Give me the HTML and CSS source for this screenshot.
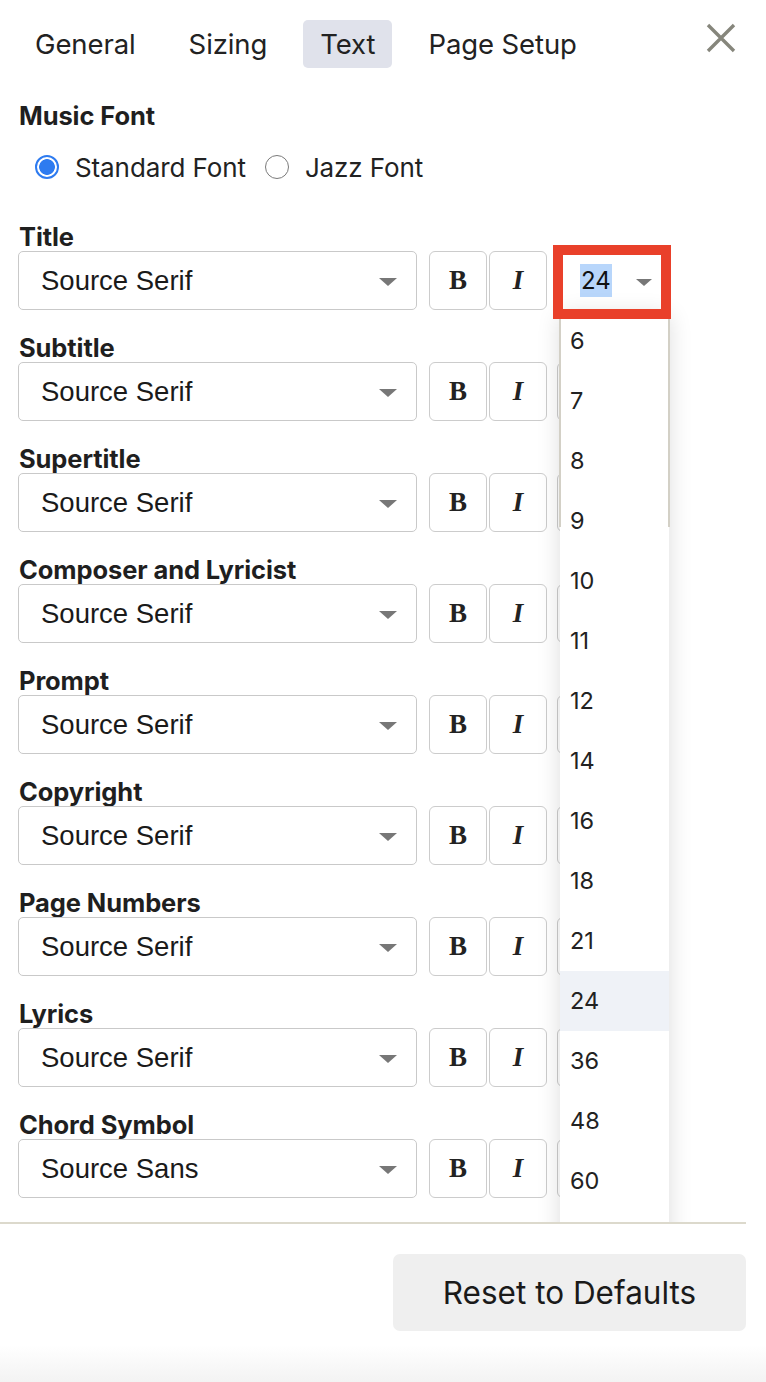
FILE: index.html
```html
<!DOCTYPE html>
<html>
<head>
<meta charset="utf-8">
<link rel="stylesheet" href="styles.css">
</head>
<body>
<div class="dialog">
  <div class="content">
    <div class="tabbar">
      <nav class="tabs">
        <span class="tab">General</span>
        <span class="tab">Sizing</span>
        <span class="tab active">Text</span>
        <span class="tab">Page Setup</span>
      </nav>
      <button class="close" aria-label="Close">
        <svg width="30" height="30" viewBox="0 0 30 30"><path d="M2 2 L28 28 M28 2 L2 28" stroke="#86867c" stroke-width="3.4" fill="none"/></svg>
      </button>
    </div>

    <section class="music">
      <div class="label">Music Font</div>
      <div class="radios">
        <span class="radio checked"></span><span class="rlabel">Standard Font</span>
        <span class="radio"></span><span class="rlabel">Jazz Font</span>
      </div>
    </section>

    <div class="rows">
      <div class="row">
        <div class="label">Title</div>
        <div class="controls">
          <div class="select"><span>Source Serif</span><i class="caret"></i></div>
          <div class="btn b">B</div><div class="btn it">I</div>
          <div class="size focused"><span class="sel">24</span><i class="caret"></i></div>
        </div>
      </div>
      <div class="row">
        <div class="label">Subtitle</div>
        <div class="controls">
          <div class="select"><span>Source Serif</span><i class="caret"></i></div>
          <div class="btn b">B</div><div class="btn it">I</div>
          <div class="size"></div>
        </div>
      </div>
      <div class="row">
        <div class="label">Supertitle</div>
        <div class="controls">
          <div class="select"><span>Source Serif</span><i class="caret"></i></div>
          <div class="btn b">B</div><div class="btn it">I</div>
          <div class="size"></div>
        </div>
      </div>
      <div class="row">
        <div class="label">Composer and Lyricist</div>
        <div class="controls">
          <div class="select"><span>Source Serif</span><i class="caret"></i></div>
          <div class="btn b">B</div><div class="btn it">I</div>
          <div class="size"></div>
        </div>
      </div>
      <div class="row">
        <div class="label">Prompt</div>
        <div class="controls">
          <div class="select"><span>Source Serif</span><i class="caret"></i></div>
          <div class="btn b">B</div><div class="btn it">I</div>
          <div class="size"></div>
        </div>
      </div>
      <div class="row">
        <div class="label">Copyright</div>
        <div class="controls">
          <div class="select"><span>Source Serif</span><i class="caret"></i></div>
          <div class="btn b">B</div><div class="btn it">I</div>
          <div class="size"></div>
        </div>
      </div>
      <div class="row">
        <div class="label">Page Numbers</div>
        <div class="controls">
          <div class="select"><span>Source Serif</span><i class="caret"></i></div>
          <div class="btn b">B</div><div class="btn it">I</div>
          <div class="size"></div>
        </div>
      </div>
      <div class="row">
        <div class="label">Lyrics</div>
        <div class="controls">
          <div class="select"><span>Source Serif</span><i class="caret"></i></div>
          <div class="btn b">B</div><div class="btn it">I</div>
          <div class="size"></div>
        </div>
      </div>
      <div class="row">
        <div class="label">Chord Symbol</div>
        <div class="controls">
          <div class="select"><span>Source Sans</span><i class="caret"></i></div>
          <div class="btn b">B</div><div class="btn it">I</div>
          <div class="size"></div>
        </div>
      </div>
    </div>

    <ul class="size-list">
      <li>6</li><li>7</li><li>8</li><li>9</li><li>10</li><li>11</li><li>12</li><li>14</li>
      <li>16</li><li>18</li><li>21</li><li class="current">24</li><li>36</li><li>48</li><li>60</li>
    </ul>
    <div class="focus-ring"></div>
  </div>
  <footer class="footer">
    <button class="reset">Reset to Defaults</button>
  </footer>
</div>
</body>
</html>
```

FILE: styles.css
```css
* { box-sizing: border-box; }
html, body { margin: 0; padding: 0; background: #fff; }
body {
  font-family: Inter, "Noto Sans", sans-serif;
  color: #1f1f1f;
  width: 766px;
  height: 1382px;
  overflow: hidden;
}
.dialog {
  height: 1382px;
  display: flex;
  flex-direction: column;
  background: linear-gradient(to bottom, #fff 0, #fff 1345px, #f3f3f3 1382px);
}
.content {
  position: relative;
  height: 1222px;
  overflow: hidden;
  padding: 20px 20px 0 18px;
  background: #fff;
}
.tabbar {
  display: flex;
  justify-content: space-between;
  align-items: flex-start;
}
.tabs { display: flex; gap: 19px; }
.tab {
  height: 48px;
  line-height: 48px;
  padding: 0 17px;
  font-size: 27.5px;
  letter-spacing: -0.1px;
  border-radius: 5px;
  color: #222;
}
.tab.active { background: #e0e2eb; }
.close {
  border: 0;
  background: none;
  padding: 0;
  margin: 3px 10px 0 0;
  width: 30px;
  height: 30px;
}
.close svg { display: block; }

.label {
  font-weight: 700;
  font-size: 25.5px;
  line-height: 28px;
  height: 28px;
  padding-left: 1px;
  letter-spacing: -0.1px;
  color: #1f1f1f;
}
.music { margin-top: 34px; }
.radios {
  display: flex;
  align-items: center;
  height: 30px;
  margin-top: 22px;
  padding-left: 17px;
}
.radio {
  width: 24px;
  height: 24px;
  border-radius: 50%;
  border: 1.5px solid #7a7a7a;
  background: #fff;
  margin-right: 16px;
  flex: none;
}
.radio + .rlabel { margin-left: 0; }
.radio.checked {
  border: 2px solid #2e7bf0;
  background: radial-gradient(circle, #2e7bf0 0 7.5px, #fff 8.2px);
}
.rlabel {
  font-size: 26px;
  letter-spacing: -0.1px;
  margin-right: 19px;
  color: #222;
}

.rows { margin-top: 41px; }
.row { margin-bottom: 24px; }
.controls {
  display: flex;
  height: 59px;
}
.select {
  width: 399px;
  height: 59px;
  border: 1.5px solid #c9c9c9;
  border-radius: 5px;
  display: flex;
  align-items: center;
  justify-content: space-between;
  padding: 0 19px 0 22px;
  font-family: "Liberation Sans", Arial, sans-serif;
  font-size: 27.5px;
  color: #1a1a1a;
}
.caret {
  width: 0;
  height: 0;
  border-left: 9px solid transparent;
  border-right: 9px solid transparent;
  border-top: 8px solid #777;
  margin-top: 3px;
}
.btn {
  width: 58px;
  height: 59px;
  border: 1.5px solid #cccccc;
  border-radius: 6px;
  display: flex;
  align-items: center;
  justify-content: center;
  font-family: "Liberation Serif", "Times New Roman", serif;
  font-size: 27px;
  font-weight: 700;
  color: #222;
}
.btn.b { margin-left: 12px; }
.btn.it { margin-left: 2px; font-style: italic; }
.size {
  position: relative;
  width: 112px;
  height: 59px;
  margin-left: 10px;
  border: 1.5px solid #cccccc;
  border-radius: 6px;
  display: flex;
  align-items: center;
  justify-content: space-between;
  padding: 0 16px 0 22px;
  font-size: 24px;
}
.size .sel {
  background: #b8d6fb;
  line-height: 33px;
  padding: 0 1px;
  color: #111;
}
.size .caret {
  border-left-width: 8px;
  border-right-width: 8px;
  border-top-width: 7px;
}

.size-list {
  position: absolute;
  left: 560px;
  top: 311px;
  width: 109px;
  margin: 0;
  padding: 0 0 60px;
  list-style: none;
  background: #fff;
  box-shadow: 0 4px 22px rgba(0, 0, 0, 0.14);
  z-index: 2;
}
.size-list::before {
  content: "";
  position: absolute;
  left: -1px;
  right: -1px;
  top: 0;
  height: 216px;
  border-left: 2px solid #d3d0c6;
  border-right: 2px solid #d3d0c6;
  pointer-events: none;
}
.size-list li {
  height: 60px;
  line-height: 60px;
  padding-left: 10px;
  font-size: 23.5px;
  color: #222;
}
.size-list li.current { background: #eff2f7; }

.focus-ring {
  position: absolute;
  left: 553px;
  top: 245px;
  width: 118px;
  height: 74px;
  border: 10px solid #e9402a;
  z-index: 3;
}

.footer {
  width: 746px;
  border-top: 2px solid #dcd9cc;
  padding-top: 30px;
  display: flex;
  justify-content: flex-end;
}
.reset {
  width: 353px;
  height: 77px;
  border: 0;
  border-radius: 7px;
  background: #efefef;
  font-family: Inter, "Noto Sans", sans-serif;
  font-size: 31.5px;
  letter-spacing: 0;
  color: #1a1a1a;
}
```
